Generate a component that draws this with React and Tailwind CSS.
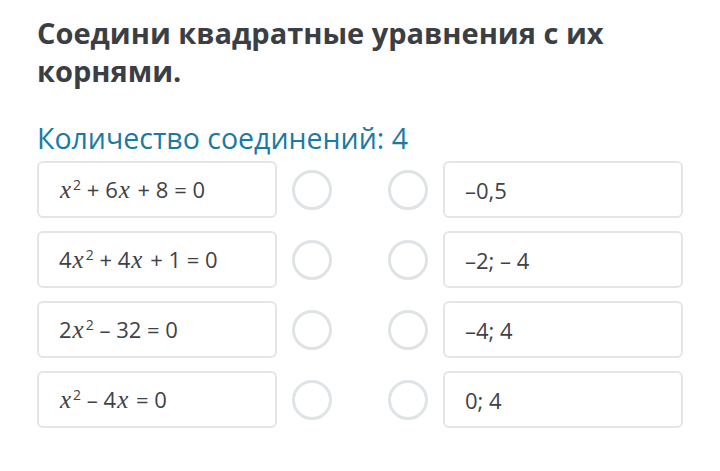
const rows = [
  { left: <><i className="math">x</i><sup>2</sup> + 6<i className="math">x</i> + 8 = 0</>, right: "–0,5" },
  { left: <>4<i className="math">x</i><sup>2</sup> + 4<i className="math">x</i> + 1 = 0</>, right: "–2; – 4" },
  { left: <>2<i className="math">x</i><sup>2</sup> – 32 = 0</>, right: "–4; 4" },
  { left: <><i className="math">x</i><sup>2</sup> – 4<i className="math">x</i> = 0</>, right: "0; 4" },
];

function Box({ children }) {
  return (
    <div className="flex h-[57px] w-[240px] items-center rounded-md border-2 border-[#e3e6e8] bg-white pl-[20px] text-[22px] text-[#3f4246]">
      <span className="leading-none">{children}</span>
    </div>
  );
}

function Dot() {
  return <div className="h-[40px] w-[40px] rounded-full border-[3px] border-[#dfe3e5]" />;
}

export default function App() {
  return (
    <div
      className="h-[471px] w-[720px] bg-white pl-[37px] pt-[14px]"
      style={{ fontFamily: "'Open Sans', 'Noto Sans', sans-serif" }}
    >
      <style>{`.math{font-family:'Liberation Serif','DejaVu Serif',serif;font-style:italic;font-size:25px;margin:0 2px 0 1px;} sup{font-size:14px;top:-0.6em;}`}</style>
      <h1 className="text-[29px] font-bold leading-[38px] text-[#3b3e43]">
        Соедини квадратные уравнения с их
        <br />
        корнями.
      </h1>
      <p className="mt-[30px] text-[28.5px] leading-[36px] text-[#1b7aa4]">
        Количество соединений: 4
      </p>
      <div className="mt-[5px] flex flex-col gap-[13px]">
        {rows.map((r, i) => (
          <div key={i} className="flex items-center">
            <Box>{r.left}</Box>
            <div className="ml-[15px]"><Dot /></div>
            <div className="ml-[56px]"><Dot /></div>
            <div className="ml-[15px]"><Box>{r.right}</Box></div>
          </div>
        ))}
      </div>
    </div>
  );
}
